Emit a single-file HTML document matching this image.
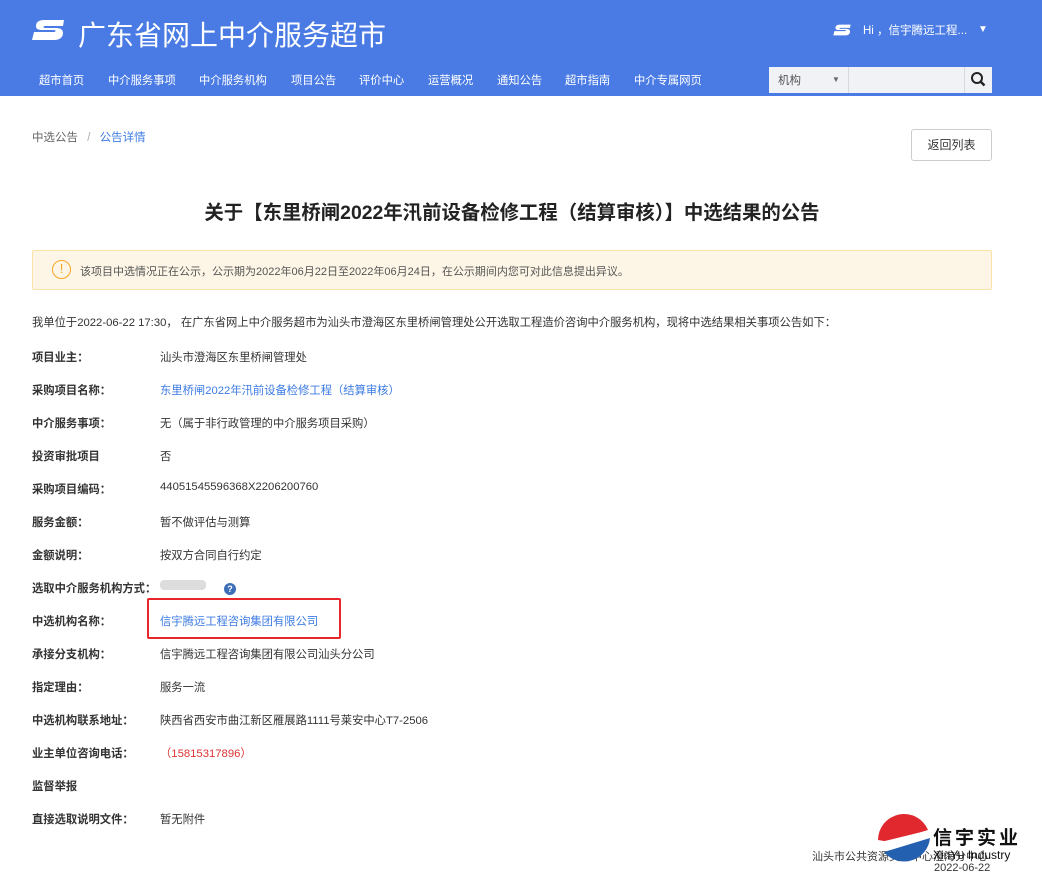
<!DOCTYPE html><html><head><meta charset="utf-8"><style>
*{margin:0;padding:0;box-sizing:border-box}
body{width:1042px;height:881px;overflow:hidden;background:#fff;font-family:"Liberation Sans","Noto Sans CJK SC",sans-serif;color:#333;position:relative}
.hd{position:absolute;left:0;top:0;width:1042px;height:96px;background:#4a7be4}
.t{position:absolute;white-space:nowrap}
.nav{top:72px;color:#fff;font-size:11.3px}
.row{position:absolute;left:32px;font-size:11.3px;white-space:nowrap}
.row b{font-weight:bold;color:#333;position:absolute;left:0}
.row span{position:absolute;left:128px}
.blue{color:#3c7be3}
</style></head><body>
<div class="hd"></div>
<svg class="t" style="left:32px;top:17px" width="34" height="26" viewBox="0 0 34 26"><path d="M32 3H12C6 3 4 6 4 9c0 3 2 4 6 4h12c2 0 2 2 0 2H2l-2 8h22c6 0 9-3 9-7 0-3-2-5-7-5H13c-2 0-2-2 0-2h18z" fill="#fff"/></svg>
<div class="t" style="left:78px;top:14px;font-size:28px;color:#fff">广东省网上中介服务超市</div>
<svg class="t" style="left:833px;top:23px" width="19" height="14" viewBox="0 0 34 26"><path d="M32 3H12C6 3 4 6 4 9c0 3 2 4 6 4h12c2 0 2 2 0 2H2l-2 8h22c6 0 9-3 9-7 0-3-2-5-7-5H13c-2 0-2-2 0-2h18z" fill="#fff"/></svg>
<div class="t" style="left:863px;top:22px;font-size:11.5px;color:#fff">Hi ，信宇腾远工程...</div>
<div class="t" style="left:978px;top:24px;font-size:10px;color:#fff">▼</div>
<div class="t nav" style="left:39px">超市首页</div>
<div class="t nav" style="left:108px">中介服务事项</div>
<div class="t nav" style="left:199px">中介服务机构</div>
<div class="t nav" style="left:291px">项目公告</div>
<div class="t nav" style="left:359px">评价中心</div>
<div class="t nav" style="left:428px">运营概况</div>
<div class="t nav" style="left:497px">通知公告</div>
<div class="t nav" style="left:565px">超市指南</div>
<div class="t nav" style="left:634px">中介专属网页</div>
<div class="t" style="left:769px;top:67px;width:223px;height:26px;background:#f0f2f5"></div>
<div class="t" style="left:848px;top:67px;width:1px;height:26px;background:#d8d8d8"></div>
<div class="t" style="left:964px;top:67px;width:1px;height:26px;background:#d8d8d8"></div>
<div class="t" style="left:778px;top:72px;font-size:11.5px;color:#555">机构</div>
<div class="t" style="left:832px;top:75px;font-size:8px;color:#666">▼</div>
<svg class="t" style="left:970px;top:71px" width="17" height="17" viewBox="0 0 17 17"><circle cx="7" cy="7" r="5" fill="none" stroke="#222" stroke-width="2"/><path d="M10.5 10.5l4 4" stroke="#222" stroke-width="2.4"/></svg>
<div class="t" style="left:32px;top:129px;font-size:11.5px;color:#666">中选公告 <span style="color:#aaa;margin:0 6px">/</span> <span class="blue">公告详情</span></div>
<div class="t" style="left:911px;top:129px;width:81px;height:32px;border:1px solid #ccc;border-radius:3px;font-size:12px;text-align:center;line-height:30px">返回列表</div>
<div class="t" style="left:-9px;width:1042px;text-align:center;top:196px;font-size:19.4px;font-weight:bold;color:#222">关于【东里桥闸2022年汛前设备检修工程（结算审核）】中选结果的公告</div>
<div class="t" style="left:32px;top:250px;width:960px;height:40px;background:#fdf6e6;border:1px solid #fbe3a8;border-radius:2px"></div>
<div class="t" style="left:52px;top:260px;width:19px;height:19px;border:1.5px solid #f5a623;border-radius:50%;color:#f5a623;font-size:13px;text-align:center;line-height:16px">!</div>
<div class="t" style="left:80px;top:263px;font-size:11px;color:#555">该项目中选情况正在公示，公示期为2022年06月22日至2022年06月24日，在公示期间内您可对此信息提出异议。</div>
<div class="t" style="left:32px;top:314px;font-size:11.3px">我单位于2022-06-22 17:30， 在广东省网上中介服务超市为汕头市澄海区东里桥闸管理处公开选取工程造价咨询中介服务机构，现将中选结果相关事项公告如下：</div>
<div class="row" style="top:349px"><b>项目业主：</b><span>汕头市澄海区东里桥闸管理处</span></div>
<div class="row" style="top:382px"><b>采购项目名称：</b><span class="blue">东里桥闸2022年汛前设备检修工程（结算审核）</span></div>
<div class="row" style="top:415px"><b>中介服务事项：</b><span>无（属于非行政管理的中介服务项目采购）</span></div>
<div class="row" style="top:448px"><b>投资审批项目</b><span>否</span></div>
<div class="row" style="top:481px"><b>采购项目编码：</b><span>44051545596368X2206200760</span></div>
<div class="row" style="top:514px"><b>服务金额：</b><span>暂不做评估与测算</span></div>
<div class="row" style="top:547px"><b>金额说明：</b><span>按双方合同自行约定</span></div>
<div class="row" style="top:580px"><b>选取中介服务机构方式：</b></div>
<div class="t" style="left:160px;top:580px;width:46px;height:10px;background:#ddd;border-radius:4px"></div>
<div class="t" style="left:224px;top:583px;width:12px;height:12px;border-radius:50%;background:#3d6fb8;color:#fff;font-size:9px;text-align:center;line-height:12px;font-weight:bold">?</div>
<div class="row" style="top:613px"><b>中选机构名称：</b><span class="blue">信宇腾远工程咨询集团有限公司</span></div>
<div class="t" style="left:147px;top:598px;width:194px;height:41px;border:2px solid #e8262a;border-radius:2px"></div>
<div class="row" style="top:646px"><b>承接分支机构：</b><span>信宇腾远工程咨询集团有限公司汕头分公司</span></div>
<div class="row" style="top:679px"><b>指定理由：</b><span>服务一流</span></div>
<div class="row" style="top:712px"><b>中选机构联系地址：</b><span>陕西省西安市曲江新区雁展路1111号莱安中心T7-2506</span></div>
<div class="row" style="top:745px"><b>业主单位咨询电话：</b><span style="color:#d33">（15815317896）</span></div>
<div class="row" style="top:778px"><b>监督举报</b></div>
<div class="row" style="top:811px"><b>直接选取说明文件：</b><span>暂无附件</span></div>
<div class="t" style="left:812px;top:848px;font-size:11px;color:#333">汕头市公共资源交易中心澄海分中心</div>
<svg class="t" style="left:876px;top:812px" width="56" height="56" viewBox="0 0 56 56"><path d="M2 28A26 26 0 0 1 52 18L14 30Z" fill="#e0282e"/><path d="M8 40L54 26A26 26 0 0 1 8 40Z" fill="#2460b0"/><path d="M3 32L52 20" stroke="#fff" stroke-width="3"/></svg>
<div class="t" style="left:933px;top:823px;font-size:19px;font-weight:bold;color:#111;letter-spacing:3px">信宇实业</div>
<div class="t" style="left:933px;top:848px;font-size:12px;color:#111">XinYu Industry</div>
<div class="t" style="left:934px;top:862px;font-size:11px;color:#333">2022-06-22</div>
</body></html>
